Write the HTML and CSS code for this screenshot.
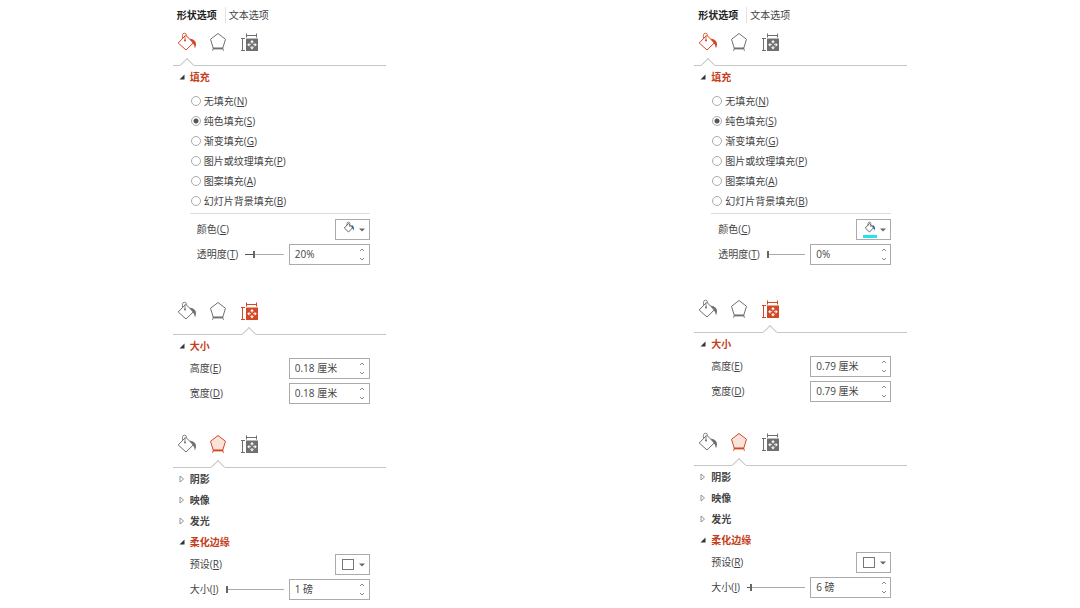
FILE: index.html
```
<!DOCTYPE html>
<html lang="zh-CN">
<head>
    <meta charset="UTF-8">
    <meta name="viewport" content="width=device-width, initial-scale=1.0">
    <title>设置形状格式</title>
    <link rel="stylesheet" href="styles.css">
</head>
<body>
<svg class="sprite" aria-hidden="true">
    <symbol id="icon-fill" viewBox="0 0 20 20">
        <path d="M8.5 3.5L1.2 11L9 18L16 11.2" fill="none" stroke="currentColor"/>
        <path d="M9 3.5L15 9.5" fill="none" stroke="currentColor"/>
        <path d="M5.500 6V3.2a2 2 0 0 1 4 0V4" fill="none" stroke="currentColor" stroke-width="0.8"/>
        <path d="M8 3.5v5" fill="none" stroke="currentColor" stroke-width="0.8"/>
        <circle cx="8" cy="8.500" r="1" fill="currentColor"/>
        <path d="M12.500 6.500Q19.500 7.500 19 13L18 16.500Q17.500 12.500 15.500 11Z" fill="currentColor"/>
    </symbol>
    <symbol id="icon-effects" viewBox="0 0 20 20">
        <path class="shape" d="M10 1.500L17.500 7.300L14.700 16.300H5.300L2.500 7.300Z" stroke="currentColor"/>
        <path d="M5 16.500h10" fill="none" stroke="currentColor" stroke-width="1.8"/>
        <path d="M5.300 16L4.500 19M14.700 16L15.500 19" fill="none" stroke="currentColor" stroke-width="0.8"/>
    </symbol>
    <symbol id="icon-size" viewBox="0 0 20 20">
        <path d="M7 3.500h11M7.500 1.500v4M17.500 1.500v4M3.500 6.500v12M2 6.500h4M2 18.500h4" fill="none" stroke="currentColor"/>
        <path d="M7 6.500h12v12.500H7z" fill="currentColor"/>
        <path d="M13 8l2 2.200h-4zM13 17.500l2-2.200h-4zM8.200 12.700l2.200-2v4zM17.800 12.700l-2.200-2v4z" fill="#fff"/>
        <path d="M13 10v1.500M13 14v1.500M10.300 12.700h1.500M14.200 12.700h1.500" fill="none" stroke="#fff"/>
    </symbol>
    <symbol id="icon-bucket" viewBox="0 0 14 14">
        <path d="M6.500 2.500L2.300 7L6.500 11L10.500 6.800Z" fill="none" stroke="#666"/>
        <path d="M5 4.500V2.500a1.400 1.400 0 0 1 2.800 0V6" fill="none" stroke="#666" stroke-width="0.8"/>
        <path d="M9.300 4Q12.500 4.500 12 9.500Q11 7.500 10 7Z" fill="#2f5f93"/>
    </symbol>
    <symbol id="icon-up" viewBox="0 0 6 4">
        <path d="M1 3L3 1L5 3" fill="none" stroke="#888"/>
    </symbol>
    <symbol id="icon-down" viewBox="0 0 6 4">
        <path d="M1 1L3 3L5 1" fill="none" stroke="#888"/>
    </symbol>
    <symbol id="icon-drop" viewBox="0 0 6 4">
        <path d="M0 0.500h6L3 3.500z" fill="#666"/>
    </symbol>
    <symbol id="icon-open" viewBox="0 0 6 6">
        <path d="M5.500 0.500v5H0.500z" fill="#333"/>
    </symbol>
    <symbol id="icon-closed" viewBox="0 0 6 8">
        <path d="M1 1v6L4.500 4z" fill="none" stroke="#888" stroke-width="0.9"/>
    </symbol>
</svg>

<main class="page">
    <div class="pane">
        <nav class="tabs">
            <button type="button" class="tab active">形状选项</button>
            <button type="button" class="tab">文本选项</button>
        </nav>

        <section class="group">
            <div class="toolbar">
                <button type="button" class="tool active" aria-label="填充与线条"><svg><use href="#icon-fill"/></svg></button>
                <button type="button" class="tool" aria-label="效果"><svg><use href="#icon-effects"/></svg></button>
                <button type="button" class="tool" aria-label="大小与属性"><svg><use href="#icon-size"/></svg></button>
            </div>
            <button type="button" class="heading open"><svg><use href="#icon-open"/></svg>填充</button>
            <div class="radios">
                <label><input type="radio" name="fill-a"><span>无填充(<u>N</u>)</span></label>
                <label><input type="radio" name="fill-a" checked><span>纯色填充(<u>S</u>)</span></label>
                <label><input type="radio" name="fill-a"><span>渐变填充(<u>G</u>)</span></label>
                <label><input type="radio" name="fill-a"><span>图片或纹理填充(<u>P</u>)</span></label>
                <label><input type="radio" name="fill-a"><span>图案填充(<u>A</u>)</span></label>
                <label><input type="radio" name="fill-a"><span>幻灯片背景填充(<u>B</u>)</span></label>
            </div>
            <div class="row indent">
                <label for="color-a">颜色(<u>C</u>)</label>
                <button type="button" id="color-a" class="picker">
                    <span class="swatch"><svg><use href="#icon-bucket"/></svg></span>
                    <svg class="drop"><use href="#icon-drop"/></svg>
                </button>
            </div>
            <div class="row indent">
                <label for="alpha-a">透明度(<u>T</u>)</label>
                <input type="range" class="slider" value="20" style="--value: 20%" aria-label="透明度">
                <div class="spinner">
                    <input type="text" id="alpha-a" value="20%">
                    <div class="steps">
                        <button type="button" aria-label="增加"><svg><use href="#icon-up"/></svg></button>
                        <button type="button" aria-label="减少"><svg><use href="#icon-down"/></svg></button>
                    </div>
                </div>
            </div>
        </section>

        <section class="group">
            <div class="toolbar">
                <button type="button" class="tool" aria-label="填充与线条"><svg><use href="#icon-fill"/></svg></button>
                <button type="button" class="tool" aria-label="效果"><svg><use href="#icon-effects"/></svg></button>
                <button type="button" class="tool active" aria-label="大小与属性"><svg><use href="#icon-size"/></svg></button>
            </div>
            <button type="button" class="heading open"><svg><use href="#icon-open"/></svg>大小</button>
            <div class="row">
                <label for="height-a">高度(<u>E</u>)</label>
                <div class="spinner">
                    <input type="text" id="height-a" value="0.18 厘米">
                    <div class="steps">
                        <button type="button" aria-label="增加"><svg><use href="#icon-up"/></svg></button>
                        <button type="button" aria-label="减少"><svg><use href="#icon-down"/></svg></button>
                    </div>
                </div>
            </div>
            <div class="row">
                <label for="width-a">宽度(<u>D</u>)</label>
                <div class="spinner">
                    <input type="text" id="width-a" value="0.18 厘米">
                    <div class="steps">
                        <button type="button" aria-label="增加"><svg><use href="#icon-up"/></svg></button>
                        <button type="button" aria-label="减少"><svg><use href="#icon-down"/></svg></button>
                    </div>
                </div>
            </div>
        </section>

        <section class="group">
            <div class="toolbar">
                <button type="button" class="tool" aria-label="填充与线条"><svg><use href="#icon-fill"/></svg></button>
                <button type="button" class="tool active" aria-label="效果"><svg><use href="#icon-effects"/></svg></button>
                <button type="button" class="tool" aria-label="大小与属性"><svg><use href="#icon-size"/></svg></button>
            </div>
            <button type="button" class="heading"><svg><use href="#icon-closed"/></svg>阴影</button>
            <button type="button" class="heading"><svg><use href="#icon-closed"/></svg>映像</button>
            <button type="button" class="heading"><svg><use href="#icon-closed"/></svg>发光</button>
            <button type="button" class="heading open"><svg><use href="#icon-open"/></svg>柔化边缘</button>
            <div class="row">
                <label for="preset-a">预设(<u>R</u>)</label>
                <button type="button" id="preset-a" class="picker">
                    <span class="preset"></span>
                    <svg class="drop"><use href="#icon-drop"/></svg>
                </button>
            </div>
            <div class="row">
                <label for="soft-a">大小(<u>I</u>)</label>
                <input type="range" class="slider" value="1" style="--value: 1%" aria-label="大小">
                <div class="spinner">
                    <input type="text" id="soft-a" value="1 磅">
                    <div class="steps">
                        <button type="button" aria-label="增加"><svg><use href="#icon-up"/></svg></button>
                        <button type="button" aria-label="减少"><svg><use href="#icon-down"/></svg></button>
                    </div>
                </div>
            </div>
        </section>
    </div>

    <div class="pane compact">
        <nav class="tabs">
            <button type="button" class="tab active">形状选项</button>
            <button type="button" class="tab">文本选项</button>
        </nav>

        <section class="group">
            <div class="toolbar">
                <button type="button" class="tool active" aria-label="填充与线条"><svg><use href="#icon-fill"/></svg></button>
                <button type="button" class="tool" aria-label="效果"><svg><use href="#icon-effects"/></svg></button>
                <button type="button" class="tool" aria-label="大小与属性"><svg><use href="#icon-size"/></svg></button>
            </div>
            <button type="button" class="heading open"><svg><use href="#icon-open"/></svg>填充</button>
            <div class="radios">
                <label><input type="radio" name="fill-b"><span>无填充(<u>N</u>)</span></label>
                <label><input type="radio" name="fill-b" checked><span>纯色填充(<u>S</u>)</span></label>
                <label><input type="radio" name="fill-b"><span>渐变填充(<u>G</u>)</span></label>
                <label><input type="radio" name="fill-b"><span>图片或纹理填充(<u>P</u>)</span></label>
                <label><input type="radio" name="fill-b"><span>图案填充(<u>A</u>)</span></label>
                <label><input type="radio" name="fill-b"><span>幻灯片背景填充(<u>B</u>)</span></label>
            </div>
            <div class="row indent">
                <label for="color-b">颜色(<u>C</u>)</label>
                <button type="button" id="color-b" class="picker">
                    <span class="swatch cyan"><svg><use href="#icon-bucket"/></svg></span>
                    <svg class="drop"><use href="#icon-drop"/></svg>
                </button>
            </div>
            <div class="row indent">
                <label for="alpha-b">透明度(<u>T</u>)</label>
                <input type="range" class="slider" value="0" style="--value: 0%" aria-label="透明度">
                <div class="spinner">
                    <input type="text" id="alpha-b" value="0%">
                    <div class="steps">
                        <button type="button" aria-label="增加"><svg><use href="#icon-up"/></svg></button>
                        <button type="button" aria-label="减少"><svg><use href="#icon-down"/></svg></button>
                    </div>
                </div>
            </div>
        </section>

        <section class="group">
            <div class="toolbar">
                <button type="button" class="tool" aria-label="填充与线条"><svg><use href="#icon-fill"/></svg></button>
                <button type="button" class="tool" aria-label="效果"><svg><use href="#icon-effects"/></svg></button>
                <button type="button" class="tool active" aria-label="大小与属性"><svg><use href="#icon-size"/></svg></button>
            </div>
            <button type="button" class="heading open"><svg><use href="#icon-open"/></svg>大小</button>
            <div class="row">
                <label for="height-b">高度(<u>E</u>)</label>
                <div class="spinner">
                    <input type="text" id="height-b" value="0.79 厘米">
                    <div class="steps">
                        <button type="button" aria-label="增加"><svg><use href="#icon-up"/></svg></button>
                        <button type="button" aria-label="减少"><svg><use href="#icon-down"/></svg></button>
                    </div>
                </div>
            </div>
            <div class="row">
                <label for="width-b">宽度(<u>D</u>)</label>
                <div class="spinner">
                    <input type="text" id="width-b" value="0.79 厘米">
                    <div class="steps">
                        <button type="button" aria-label="增加"><svg><use href="#icon-up"/></svg></button>
                        <button type="button" aria-label="减少"><svg><use href="#icon-down"/></svg></button>
                    </div>
                </div>
            </div>
        </section>

        <section class="group">
            <div class="toolbar">
                <button type="button" class="tool" aria-label="填充与线条"><svg><use href="#icon-fill"/></svg></button>
                <button type="button" class="tool active" aria-label="效果"><svg><use href="#icon-effects"/></svg></button>
                <button type="button" class="tool" aria-label="大小与属性"><svg><use href="#icon-size"/></svg></button>
            </div>
            <button type="button" class="heading"><svg><use href="#icon-closed"/></svg>阴影</button>
            <button type="button" class="heading"><svg><use href="#icon-closed"/></svg>映像</button>
            <button type="button" class="heading"><svg><use href="#icon-closed"/></svg>发光</button>
            <button type="button" class="heading open"><svg><use href="#icon-open"/></svg>柔化边缘</button>
            <div class="row">
                <label for="preset-b">预设(<u>R</u>)</label>
                <button type="button" id="preset-b" class="picker">
                    <span class="preset"></span>
                    <svg class="drop"><use href="#icon-drop"/></svg>
                </button>
            </div>
            <div class="row">
                <label for="soft-b">大小(<u>I</u>)</label>
                <input type="range" class="slider" value="6" style="--value: 6%" aria-label="大小">
                <div class="spinner">
                    <input type="text" id="soft-b" value="6 磅">
                    <div class="steps">
                        <button type="button" aria-label="增加"><svg><use href="#icon-up"/></svg></button>
                        <button type="button" aria-label="减少"><svg><use href="#icon-down"/></svg></button>
                    </div>
                </div>
            </div>
        </section>
    </div>
</main>
</body>
</html>
```
FILE: styles.css
```
* {
    box-sizing: border-box;
}
body {
    margin: 0;
    background-color: #fff;
    color: #444;
    font-family: "Open Sans", "Noto Sans CJK SC", sans-serif;
    font-size: 10px;
    line-height: 16px;
}
button, input {
    margin: 0;
    padding: 0;
    border: none;
    background: none;
    color: inherit;
    font: inherit;
}
button {
    cursor: pointer;
}
u {
    text-underline-offset: 1px;
}
.sprite {
    display: none;
}
.page {
    display: flex;
    justify-content: space-between;
    padding: 0 16%;
}
.pane {
    width: 29%;
    min-width: 200px;
}

/* text tabs */
.tabs {
    display: flex;
    padding: 7px 0 9px 4px;
}
.tab + .tab {
    margin-left: 8px;
    padding-left: 3px;
    border-left: 1px solid #e1e1e1;
}
.tab.active {
    color: #222;
    font-weight: bold;
}

/* icon tabs with a notch under the active one */
.group + .group {
    margin-top: 28px;
}
.group:nth-of-type(2) {
    margin-top: 34px;
}
.compact .group:nth-of-type(2) {
    margin-top: 32px;
}
.toolbar {
    display: flex;
    gap: 11px;
    height: 34px;
    padding-left: 4px;
    border-bottom: 1px solid #c6c6c6;
}
.tool {
    --shape-fill: none;
    position: relative;
    display: flex;
    width: 20px;
    color: #707070;
}
.tool svg {
    width: 20px;
    height: 20px;
}
.shape {
    fill: var(--shape-fill);
}
.tool.active {
    --shape-fill: #fbe3da;
    color: #d24726;
}
.tool.active::after {
    content: "";
    position: absolute;
    bottom: -5px;
    left: 5px;
    width: 8px;
    height: 8px;
    border: 1px solid #c6c6c6;
    border-right-color: transparent;
    border-bottom-color: transparent;
    background-color: #fff;
    transform: rotate(45deg);
}

.heading {
    display: flex;
    align-items: center;
    gap: 5px;
    width: 100%;
    height: 21px;
    padding-left: 6px;
    font-weight: bold;
}
.heading svg {
    width: 6px;
    height: 8px;
}
.heading.open {
    color: #c43e1c;
}
.heading.open svg {
    height: 6px;
}

.radios {
    margin: 0 16px 3px 17px;
    padding: 4px 0 2px 1px;
    border-bottom: 1px solid #dcdcdc;
}
.radios label {
    display: flex;
    align-items: center;
    gap: 3px;
    height: 20px;
}
.radios input {
    appearance: none;
    width: 10px;
    height: 10px;
    border: 1px solid #ababab;
    border-radius: 50%;
    background-color: #fff;
}
.radios input:checked {
    background-image: radial-gradient(circle, #555 2px, transparent 3px);
}

.row {
    display: flex;
    align-items: center;
    height: 25px;
    padding: 0 16px 0 17px;
}
.row.indent {
    padding-left: 24px;
}
.row label {
    padding-bottom: 1px;
}
.picker, .row .spinner {
    margin-left: auto;
}
.slider {
    flex: 1;
    appearance: none;
    min-width: 0;
    height: 8px;
    margin: 0 5px 0 7px;
}
.row .slider + .spinner {
    margin-left: 0;
}
.slider::-webkit-slider-runnable-track {
    height: 7px;
    background: linear-gradient(to right, #555 var(--value), #ababab var(--value)) center / 100% 1px no-repeat;
}
.slider::-webkit-slider-thumb {
    appearance: none;
    width: 2px;
    height: 7px;
    background-color: #666;
}

.spinner {
    display: flex;
    width: 81px;
    height: 21px;
    border: 1px solid #ababab;
}
.spinner input {
    flex: 1;
    min-width: 0;
    padding: 0 0 2px 5px;
}
.steps {
    display: flex;
    flex-direction: column;
    justify-content: space-around;
    width: 13px;
}
.steps button {
    display: flex;
    justify-content: center;
}
.steps svg, .drop {
    width: 6px;
    height: 4px;
}

.picker {
    display: flex;
    align-items: center;
    justify-content: space-between;
    width: 35px;
    height: 21px;
    padding: 0 4px 0 6px;
    border: 1px solid #ababab;
}
.swatch {
    display: flex;
    width: 14px;
    height: 17px;
    border-bottom: 3px solid transparent;
}
.swatch svg {
    width: 14px;
    height: 14px;
}
.swatch.cyan {
    border-bottom-color: #1fe5f0;
}
.preset {
    width: 12px;
    height: 11px;
    border: 1px solid #777;
}
```
